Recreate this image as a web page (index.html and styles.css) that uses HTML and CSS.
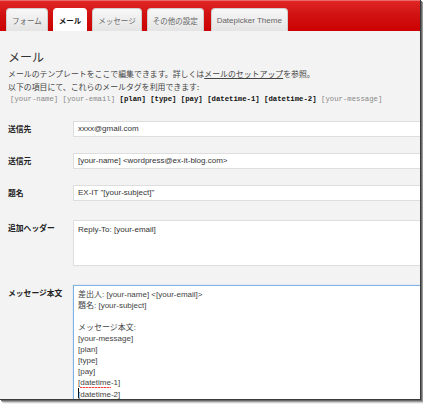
FILE: index.html
```html
<!DOCTYPE html>
<html lang="ja">
<head>
<meta charset="utf-8">
<link rel="stylesheet" href="styles.css">
</head>
<body>
<div class="frame">
  <div class="tabbar">
    <div class="tab">フォーム</div>
    <div class="tab active">メール</div>
    <div class="tab">メッセージ</div>
    <div class="tab">その他の設定</div>
    <div class="tab latin wide">Datepicker Theme</div>
  </div>
  <div class="content">
    <h2 class="title">メール</h2>
    <p class="desc">メールのテンプレートをここで編集できます。詳しくは<span class="link">メールのセットアップ</span>を参照。<br>以下の項目にて、これらのメールタグを利用できます:</p>
    <p class="tags"><span class="tag">[your-name]</span> <span class="tag">[your-email]</span> <span class="tag used">[plan]</span> <span class="tag used">[type]</span> <span class="tag used">[pay]</span> <span class="tag used">[datetime-1]</span> <span class="tag used">[datetime-2]</span> <span class="tag">[your-message]</span></p>
    <div class="form">
      <div class="row">
        <div class="label">送信先</div>
        <div class="field input">xxxx@gmail.com</div>
      </div>
      <div class="row">
        <div class="label">送信元</div>
        <div class="field input">[your-name] &lt;wordpress@ex-it-blog.com&gt;</div>
      </div>
      <div class="row">
        <div class="label">題名</div>
        <div class="field input">EX-IT "[your-subject]"</div>
      </div>
      <div class="row tall">
        <div class="label">追加ヘッダー</div>
        <div class="field area">Reply-To: [your-email]</div>
      </div>
      <div class="row tall">
        <div class="label">メッセージ本文</div>
        <div class="field area focus">差出人: [your-name] &lt;[your-email]&gt;<br>題名: [your-subject]<br><br>メッセージ本文:<br>[your-message]<br>[plan]<br>[type]<br>[pay]<br>[<span class="spell">datetime</span>-1]<br><span class="caret"></span>[<span class="spell">datetime</span>-2]</div>
      </div>
    </div>
  </div>
</div>
</body>
</html>
```
FILE: styles.css
```css
html, body {
  margin: 0;
  padding: 0;
  background: #ffffff;
}
body {
  width: 423px;
  height: 404px;
  overflow: hidden;
  font-family: "Liberation Sans", "Noto Sans CJK JP", sans-serif;
}
.frame {
  width: 420px;
  height: 399px;
  border-right: 1px solid #3a3a3a;
  border-bottom: 1px solid #3a3a3a;
  box-shadow: 1px 1px 0 #6a6a6a, 2px 2px 1px #999999, 3px 3px 2px #cccccc;
  background: #f3f3f3;
  overflow: hidden;
  box-sizing: content-box;
}
.tabbar {
  height: 31px;
  background: linear-gradient(#e02626 0, #d21414 40%, #cc0000 100%);
  border-top: 1px solid #ea6a6a;
  box-sizing: border-box;
  display: flex;
  align-items: flex-end;
  padding-left: 6px;
}
.tab {
  height: 23px;
  padding: 0 5px;
  margin-right: 5px;
  display: flex;
  align-items: center;
  border: 1px solid #cfcfcf;
  border-bottom: none;
  border-radius: 4px 4px 0 0;
  background: linear-gradient(#f7f7f7, #e4e4e4);
  color: #666666;
  font-family: "Noto Sans CJK JP", sans-serif;
  font-size: 7.5px;
  box-sizing: border-box;
}
.tab.latin {
  font-family: "Liberation Sans", sans-serif;
  font-size: 8px;
}
.tab.wide {
  margin-left: 2px;
  padding: 0 5px;
}
.tab.active {
  background: #ffffff;
  color: #111111;
  font-weight: bold;
  border-color: #ffffff;
}
.content {
  padding: 0 0 0 8px;
}
.title {
  margin: 18px 0 0 0;
  font-family: "Noto Sans CJK JP", sans-serif;
  font-weight: normal;
  font-size: 12px;
  line-height: 16px;
  color: #333333;
}
.desc {
  margin: 2px 0 0 0;
  font-family: "Noto Sans CJK JP", sans-serif;
  font-size: 7.9px;
  line-height: 13px;
  color: #444444;
}
.link {
  text-decoration: underline;
}
.tags {
  margin: 0 0 0 2px;
  font-family: "Liberation Mono", monospace;
  font-size: 7.3px;
  line-height: 13px;
  color: #8a8a8a;
  white-space: nowrap;
}
.tag.used {
  color: #111111;
  font-weight: bold;
}
.form {
  margin-top: 15px;
}
.row {
  display: flex;
  margin-bottom: 16px;
}
.row.tall {
  padding-top: 3px;
}
.label {
  width: 65px;
  flex: none;
  font-family: "Noto Sans CJK JP", sans-serif;
  font-weight: bold;
  font-size: 7.8px;
  color: #222222;
  line-height: 16px;
}
.field {
  flex: none;
  width: 420px;
  background: #ffffff;
  border: 1px solid #dedede;
  box-sizing: border-box;
  font-family: "Liberation Sans", "Noto Sans CJK JP", sans-serif;
  font-size: 8px;
  color: #333333;
}
.input {
  height: 16px;
  line-height: 14px;
  padding-left: 4px;
}
.area {
  height: 46px;
  padding: 3px 0 0 4px;
  line-height: 11px;
}
.area.focus {
  height: 200px;
  border-color: #7fb2e5;
  box-shadow: 0 0 1px #9cc5ee;
  color: #444444;
}
.spell {
  padding-bottom: 1px;
  background: repeating-linear-gradient(90deg, #ff3a3a 0 2px, #ffb0b0 2px 3px) left bottom / 100% 1px no-repeat;
}
.caret {
  display: inline-block;
  width: 1px;
  height: 10px;
  background: #000000;
  vertical-align: -1px;
  margin-right: -1px;
}
```
